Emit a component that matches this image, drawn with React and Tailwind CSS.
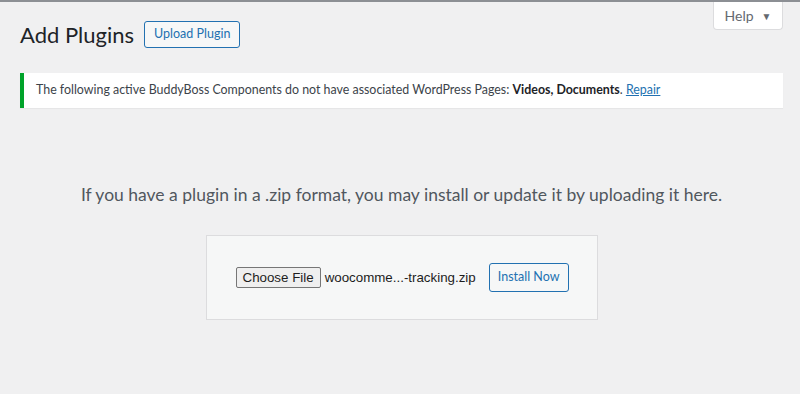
import React from "react";

const wp = { fontFamily: 'Lato, "Noto Sans", "Liberation Sans", sans-serif' };
const native = { fontFamily: '"Liberation Sans", Arial, sans-serif' };

function HelpTab() {
    return (
        <div className="float-right mr-[17px] h-[28px] w-[70px] flex items-center justify-center gap-2 bg-white border border-t-0 border-[#dcdcde] rounded-b text-[14px] text-[#646970]">
            <span>Help</span>
            <span className="text-[10px] leading-none">▼</span>
        </div>
    );
}

export default function App() {
    return (
        <div className="w-full h-[394px] bg-[#f0f0f1] border-t-2 border-[#8c8f94] text-[#3c434a] overflow-hidden" style={wp}>
            <HelpTab />
            <div className="px-5 pt-[18px] flex items-center gap-[10px]">
                <h1 className="text-[22px] leading-[29px] font-normal text-[#1d2327]">Add Plugins</h1>
                <button className="h-[27px] px-[9px] text-[12.5px] leading-none text-[#2271b1] border border-[#2271b1] rounded-[3px] bg-[#f6f7f7]">
                    Upload Plugin
                </button>
            </div>

            <div className="clear-both ml-5 mr-[17px] mt-[24px] h-[35px] flex items-center bg-white border-l-4 border-[#00a32a] shadow-[0_1px_1px_rgba(0,0,0,0.04)] pl-3 text-[12.4px]">
                <p>
                    The following active BuddyBoss Components do not have associated WordPress Pages:{" "}
                    <strong className="font-bold text-[#1d2327]">Videos, Documents</strong>.{" "}
                    <a href="#" className="text-[#2271b1] underline">Repair</a>
                </p>
            </div>

            <div className="ml-5 mr-[17px] flex flex-col items-center">
                <p className="mt-[75px] text-[17.5px] leading-[24px] text-[#50575e]">
                    If you have a plugin in a .zip format, you may install or update it by uploading it here.
                </p>
                <div className="mt-[28px] w-[392px] h-[85px] bg-[#f6f7f7] border border-[#dcdcde] flex items-center pl-[29px] pr-[28px]">
                    <div className="flex items-center gap-[4px] text-[13.33px] text-[#1d1d1d]" style={native}>
                        <span className="h-[21px] px-[6px] flex items-center bg-[#efefef] border border-[#767676] rounded-[2px]">Choose File</span>
                        <span>woocomme...-tracking.zip</span>
                    </div>
                    <button className="ml-auto h-[29px] px-[8px] text-[12.5px] text-[#2271b1] border border-[#2271b1] rounded-[3px] bg-[#f6f7f7]">
                        Install Now
                    </button>
                </div>
            </div>
        </div>
    );
}
